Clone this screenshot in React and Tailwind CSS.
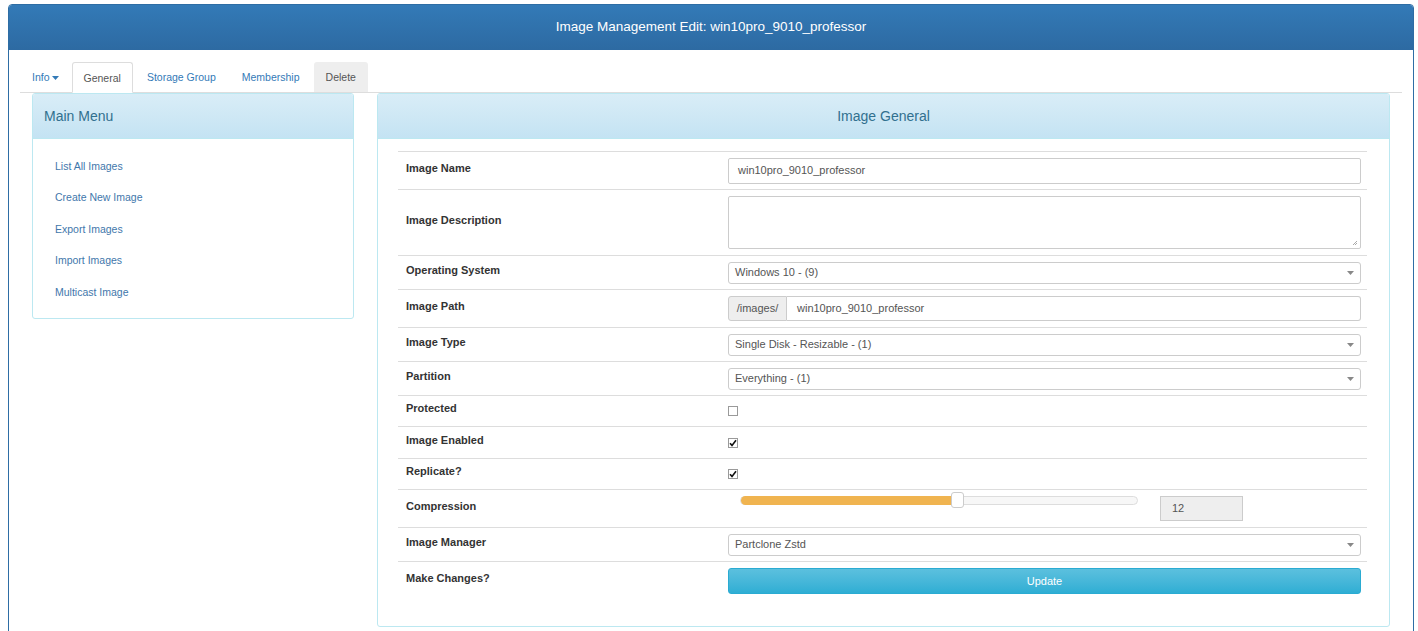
import { useState } from "react";

const menuLinks = [
  "List All Images",
  "Create New Image",
  "Export Images",
  "Import Images",
  "Multicast Image",
];

const Caret = () => (
  <svg width="7" height="4" viewBox="0 0 7 4" className="inline-block ml-[2px] mb-[1px]">
    <path d="M0 0 L7 0 L3.5 4 Z" fill="currentColor" />
  </svg>
);

const SelectBox = ({ value }) => (
  <div className="relative w-full h-[22px] border border-[#ccc] rounded-[3px] bg-white flex items-center pl-[6px] text-[11px] text-[#555]">
    {value}
    <svg width="7" height="4" viewBox="0 0 7 4" className="absolute right-[6px] top-[8px]">
      <path d="M0 0 L7 0 L3.5 4 Z" fill="#888" />
    </svg>
  </div>
);

const Checkbox = ({ checked }) => (
  <div className="w-[10px] h-[10px] border border-[#9a9a9a] bg-white flex items-center justify-center">
    {checked && (
      <svg width="8" height="8" viewBox="0 0 8 8">
        <path d="M1 4.2 L3 6.4 L7 1.2" stroke="#111" strokeWidth="1.6" fill="none" />
      </svg>
    )}
  </div>
);

const Row = ({ label, h, children, align = "items-center" }) => (
  <div className={`flex border-t border-[#ddd] ${h}`}>
    <div className="w-[322px] shrink-0 pl-2 flex items-center pb-[5px] text-[11px] font-bold text-[#333]">
      {label}
    </div>
    <div className={`flex-1 pl-2 pr-[6px] flex ${align}`}>{children}</div>
  </div>
);

export default function App() {
  const [value] = useState(12);

  return (
    <div className="min-h-screen bg-white text-[#333]" style={{ fontFamily: '"Liberation Sans", Arial, sans-serif' }}>
      <div className="ml-2 mr-[4px] mt-1 border border-[#2e6da4] rounded-t-[4px] overflow-hidden">
        {/* heading */}
        <div className="h-[45px] bg-linear-to-b from-[#337ab7] to-[#2d6aa2] text-white text-[13.5px] flex items-center justify-center">
          Image Management Edit: win10pro_9010_professor
        </div>

        <div className="bg-white px-[11px] pt-3 pb-6">
          {/* tabs */}
          <ul className="flex h-[31px] border-b border-[#ddd] text-[10.5px]">
            <li className="px-3 pt-[2px] mr-[1px] flex items-center text-[#337ab7]">
              Info
              <Caret />
            </li>
            <li className="px-[11px] pt-[2px] mr-[2px] -mb-px flex items-center bg-white border border-[#ddd] border-b-white rounded-t-[3px] text-[#555]">
              General
            </li>
            <li className="px-3 pt-[2px] mr-[2px] flex items-center text-[#337ab7]">Storage Group</li>
            <li className="px-3 pt-[2px] mr-[2px] flex items-center text-[#337ab7]">Membership</li>
            <li className="px-3 pt-[2px] flex items-center bg-[#eee] rounded-t-[3px] text-[#555]">Delete</li>
          </ul>

          <div className="flex px-3 gap-[23px]">
            {/* left: main menu */}
            <div className="w-[322px] shrink-0 self-start border border-[#bce8f1] rounded-[3px] overflow-hidden">
              <div className="h-[45px] bg-linear-to-b from-[#d9edf7] to-[#c4e3f3] border-b border-[#bce8f1] flex items-center pl-[11px] text-[14px] text-[#31708f]">
                Main Menu
              </div>
              <div className="pt-[12px] pb-[9px] pl-[22px] flex flex-col">
                {menuLinks.map((l) => (
                  <a key={l} href="#" className="h-[31.5px] flex items-center text-[10.5px] text-[#3f77ab]">
                    {l}
                  </a>
                ))}
              </div>
            </div>

            {/* right: image general */}
            <div className="w-[1013px] shrink-0 border border-[#bce8f1] rounded-[3px] overflow-hidden">
              <div className="h-[45px] bg-linear-to-b from-[#d9edf7] to-[#c4e3f3] border-b border-[#bce8f1] flex items-center justify-center text-[14px] text-[#31708f]">
                Image General
              </div>
              <div className="pt-[12px] pl-[20px] pr-[22px] pb-[26px]">
                <Row label="Image Name" h="h-[38px]">
                  <div className="w-full h-[26px] border border-[#ccc] rounded-[2px] flex items-center pl-[9px] text-[11px] text-[#555]">
                    win10pro_9010_professor
                  </div>
                </Row>
                <Row label="Image Description" h="h-[66px]">
                  <div className="relative w-full h-[53px] border border-[#ccc] rounded-[2px]">
                    <svg width="6" height="6" viewBox="0 0 6 6" className="absolute right-[2px] bottom-[2px]">
                      <path d="M5 1 L1 5 M5 3 L3 5" stroke="#aaa" strokeWidth="1" />
                    </svg>
                  </div>
                </Row>
                <Row label="Operating System" h="h-[34px]">
                  <SelectBox value="Windows 10 - (9)" />
                </Row>
                <Row label="Image Path" h="h-[38px]">
                  <div className="w-full h-[25px] flex text-[11px] text-[#555]">
                    <div className="w-[59px] bg-[#eee] border border-[#ccc] rounded-l-[3px] flex items-center justify-center">
                      /images/
                    </div>
                    <div className="flex-1 border border-l-0 border-[#ccc] rounded-r-[3px] flex items-center pl-[10px]">
                      win10pro_9010_professor
                    </div>
                  </div>
                </Row>
                <Row label="Image Type" h="h-[34px]">
                  <SelectBox value="Single Disk - Resizable - (1)" />
                </Row>
                <Row label="Partition" h="h-[34px]">
                  <SelectBox value="Everything - (1)" />
                </Row>
                <Row label="Protected" h="h-[31px]">
                  <Checkbox />
                </Row>
                <Row label="Image Enabled" h="h-[32px]">
                  <Checkbox checked />
                </Row>
                <Row label="Replicate?" h="h-[31px]">
                  <Checkbox checked />
                </Row>
                <Row label="Compression" h="h-[38px]" align="items-start pt-[6px]">
                  <div className="relative ml-3 w-[398px] h-[9px] bg-[#f7f7f7] border border-[#ddd] rounded-full">
                    <div className="absolute left-0 top-[-1px] h-[9px] w-[214px] bg-[#f0b450] rounded-l-full" />
                    <div className="absolute left-[210px] top-[-5px] w-[13px] h-[16px] bg-white border border-[#ccc] rounded-[3px]" />
                  </div>
                  <div className="ml-[22px] w-[83px] h-[25px] bg-[#eee] border border-[#ccc] flex items-center pl-[11px] text-[11px] text-[#555]">
                    {value}
                  </div>
                </Row>
                <Row label="Image Manager" h="h-[34px]">
                  <SelectBox value="Partclone Zstd" />
                </Row>
                <Row label="Make Changes?" h="h-[39px]" align="items-start pt-[6px]">
                  <button className="w-full h-[26px] bg-linear-to-b from-[#5bc0de] to-[#2eaed4] border border-[#2aabd2] rounded-[3px] text-white text-[11px]">
                    Update
                  </button>
                </Row>
              </div>
            </div>
          </div>
        </div>
      </div>
    </div>
  );
}
